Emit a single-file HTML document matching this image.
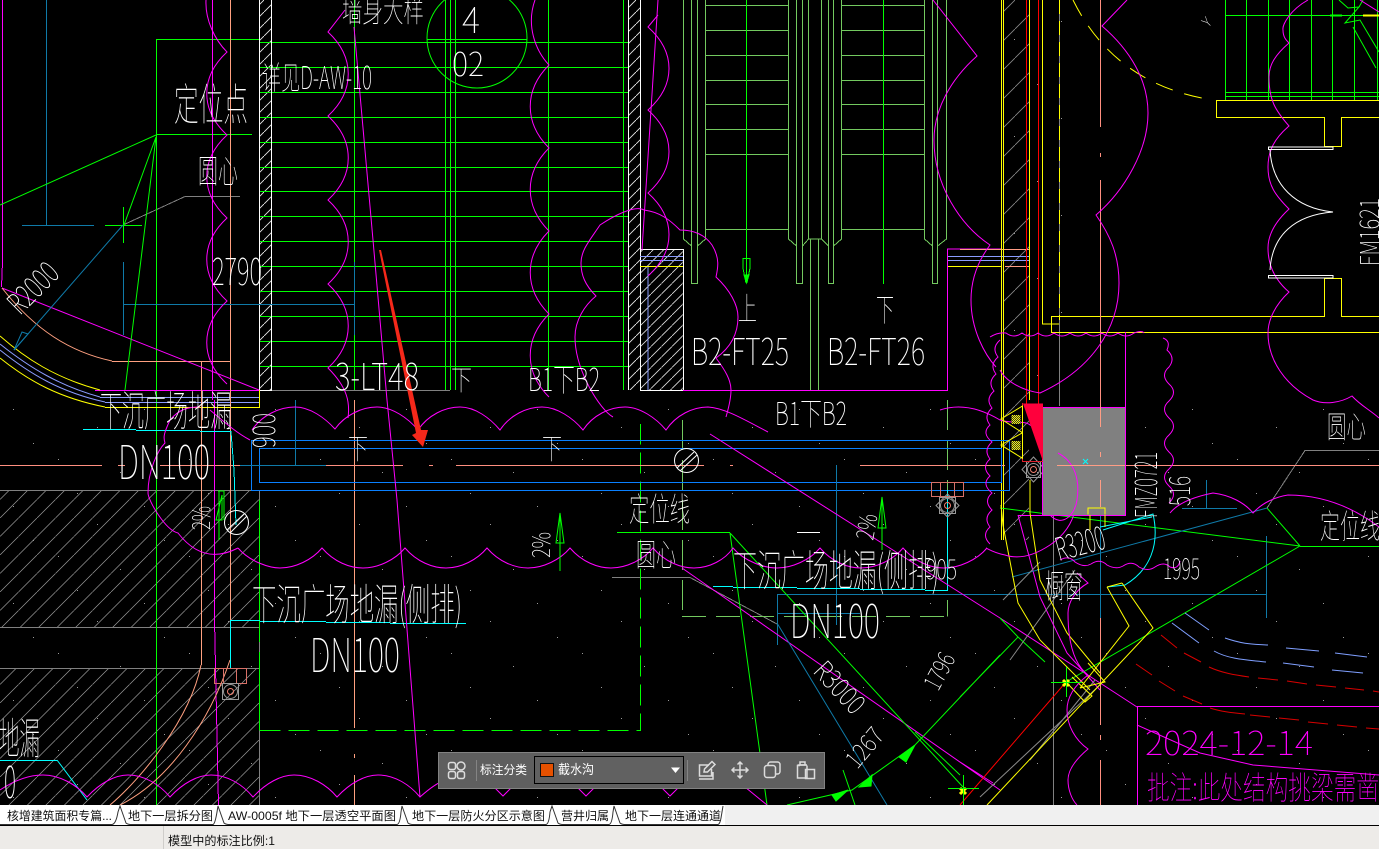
<!DOCTYPE html>
<html lang="zh"><head><meta charset="utf-8"><title>CAD</title>
<style>
html,body{margin:0;padding:0;background:#000;width:1379px;height:849px;overflow:hidden}
svg{display:block;position:absolute;left:0;top:0}
.c text{font-family:"Noto Sans CJK SC","Liberation Sans",sans-serif;font-weight:100;fill:#fff}
.ui text{font-family:"Liberation Sans","Noto Sans CJK SC",sans-serif;font-size:12px;fill:#111}
</style></head><body>
<svg width="1379" height="849" viewBox="0 0 1379 849" xmlns="http://www.w3.org/2000/svg">
<defs>
<pattern id="h18" width="18.5" height="18.5" patternUnits="userSpaceOnUse"><path d="M-1,19.5 L19.5,-1" stroke="#9a9a9a" stroke-width=".7"/></pattern>
<pattern id="hw" width="12" height="12" patternUnits="userSpaceOnUse"><path d="M-1,13 L13,-1" stroke="#e8e8e8" stroke-width=".9"/></pattern>
<pattern id="hb" width="10.5" height="10.5" patternUnits="userSpaceOnUse"><path d="M-1,11.5 L11.5,-1" stroke="#e0e0e0" stroke-width=".8"/></pattern>
<pattern id="hg" width="29" height="29" patternUnits="userSpaceOnUse"><path d="M-1,30 L30,-1" stroke="#8a8a8a" stroke-width=".8"/></pattern>
<pattern id="dots" width="131" height="97" patternUnits="userSpaceOnUse"><g fill="#9a9a9a"><rect x="13" y="21" width="1" height="1"/><rect x="58" y="71" width="1" height="1"/><rect x="97" y="39" width="1" height="1"/><rect x="120" y="84" width="1" height="1"/><rect x="33" y="55" width="1" height="1"/><rect x="77" y="8" width="1" height="1"/></g></pattern>
<pattern id="chk" width="2" height="2" patternUnits="userSpaceOnUse"><rect width="2" height="2" fill="#ffff00"/><rect width="1" height="1" fill="#333"/><rect x="1" y="1" width="1" height="1" fill="#333"/></pattern>
</defs>
<rect width="1379" height="849" fill="#000"/>
<rect y="400" width="1379" height="405" fill="url(#dots)"/>
<rect x="1002" y="0" width="60" height="400" fill="url(#dots)"/>

<!-- hatches -->
<rect x="0" y="491" width="259" height="136" fill="url(#h18)"/>
<rect x="0" y="668" width="259" height="137" fill="url(#h18)"/>
<rect x="260" y="0" width="12" height="390" fill="url(#hw)"/>
<rect x="628" y="0" width="12" height="390" fill="url(#hw)"/>
<rect x="640" y="249" width="43" height="141" fill="url(#hb)"/>
<rect x="1003" y="0" width="26" height="540" fill="url(#hg)"/>

<g fill="none" stroke-width="1" shape-rendering="crispEdges">
<!-- gray -->
<path stroke="#808080" d="M0,490.5H259M0,627.5H259M0,668.5H259M259.5,490V805M1053.5,515V805M1059.5,0V406M123,225L185,196.5H240"/>
<path stroke="#808080" d="M272,390.5H450M612,577.5H690L777,624M1267,508L1305,450.5H1379"/>
<!-- green horizontals -->
<path stroke="#00ff00" d="M260,42.5H628M260,67.5H628M260,92.5H628M260,117.5H628M260,142.5H628M260,167.5H628M260,191.5H628M260,216.5H628M260,241.5H628M260,266.5H628M260,291.5H628M260,316.5H628M260,341.5H628M260,366.5H628"/>
<path stroke="#00ff00" d="M354.5,0V390M445.5,0V390M450.5,0V390M455.5,0V390M548.5,0V390M623.5,0V390M156.5,39V805M156,39.5H260M156,134.5H252M427,39.5H527"/>
<path stroke="#00ff00" d="M105,225.5H142M123.5,207V243"/>
<path stroke="#00ff00" stroke-dasharray="21 8" d="M259.5,730.5H640.5V424"/>
<path stroke="#00ff00" d="M259.5,500V642M259.5,652V730M617,532.5H730"/>
<path stroke="#00ff00" d="M1300,546.5H1379M1225.5,15.5H1379M1225.5,0V100M1246.5,0V100M1268.5,0V100M1289.5,0V100M1311.5,0V100M1332.5,0V100M1354.5,0V100M1377.5,0V100M1225,92.5H1379M1225,96.5H1379"/>
<!-- olive stair -->
<path stroke="#73c95f" d="M683.5,0V239L691.5,246M705.5,0V239L697.5,246M691.5,0V283.5H697.5V0M705,5.5H788M705,30.5H788M705,55.5H788M705,80.5H788M705,104.5H788M705,129.5H788M705,154.5H788M705,229.5H788M841,5.5H924M841,30.5H924M841,55.5H924M841,80.5H924M841,104.5H924M841,129.5H924M841,154.5H924M841,229.5H924"/>
<path stroke="#73c95f" d="M788.5,0V239L796.5,246M802.5,0V246L808.5,239H821.5V0M808.5,0V239M821.5,239L828.5,246M828.5,0V283.5H833.5V0M841.5,0V239L833.5,246M796.5,0V283.5H802.5V0M924.5,0V239L932.5,246M946.5,0V239L937.5,246M932.5,0V283.5H937.5V0M810.5,239V390M818.5,239V390"/>
<path stroke="#73c95f" d="M682.5,420V616.5M947.5,400V616.5" stroke-dasharray="30 10"/>
<path stroke="#73c95f" d="M682,616.5H948" stroke-dasharray="24 10"/>
<path stroke="#00ff00" d="M746.5,0V283M883.5,0V284M743,258.5H750V268L747,283M743,258V268L746,283"/>
<!-- wall outlines -->
<path stroke="#fff" d="M259.5,0V390M271.5,0V390M628.5,0V390M640.5,0V390M640,249.5H683M683.5,249V390M640,390.5H683M259,390.5H272"/>
<path stroke="#8a9cff" d="M640,256.5H683M640,260.5H683M947,256.5H1029M947,260.5H1029M648,266V390M100,397.5H259M105,402.5H259"/>
<path stroke="#ffff00" d="M640,266.5H683M947,266.5H1001M105,407.5H259M259.5,390V408"/>
<path stroke="#ff00ff" d="M683,390.5H947.5V249H1002M95,390.5H259"/>
<path stroke="#ff9d85" d="M960,249.5H1029M1005,266.5H1029"/>
<!-- yellow frame -->
<path stroke="#ffff00" d="M1001.5,0V540M1003.5,0V540M1029.5,0V400M1042.5,0V324H1059" />
<path stroke="#ffff00" d="M1051.5,316.5H1324.5V278.5H1341.5V316.5H1379M1051.5,316V332.5H1379M1216.5,100.5H1379M1216.5,100V117.5H1324.5V146.5H1341.5V117.5H1379"/>
<!-- red, salmon -->
<path stroke="#ff0000" d="M1026.5,0V404M1038.5,0V404"/>
<path stroke="#ff8f80" d="M1100.5,0V127M1100.5,153V157M1100.5,180V407M1100.5,407V455M1100.5,457V460M1100.5,480V507M1100.5,618V725M1100.5,735V740M1100.5,760V805"/>
<path stroke="#ff8f80" d="M0,465.5H102M118,465.5H125M160,465.5H325M326,465.5H403M429,465.5H433M456,465.5H704M730,465.5H733M860,465.5H1005M1057,465.5H1379"/>
<path stroke="#ffa080" d="M230.5,0V361.5H112M201.5,361V665M230.5,361V660M354.5,400V728M354.5,754V758M354.5,775V805"/>
<!-- blue -->
<path stroke="#0a80ff" d="M251,440.5H1010M259,448.5H1001M259,482.5H1001M251,490.5H1010M251.5,440V491M259.5,448V483M1009.5,440V491M1001.5,448V483"/>
<!-- teal -->
<path stroke="#0f7aa8" d="M46.5,0V225.5M22,225.5H94M123,304.5H355M123.5,262V335M354.5,262V335M295.5,400V465.5M240,465.5H326M836.5,465V625M777.5,595V645M777,594.5H1267M777,613.5H860M1100.5,507V618M1266.5,536V618M1182,508.5H1237M1206.5,480V508"/>
<!-- magenta straight -->
<path stroke="#ff00ff" d="M2.5,0V262L1.5,287M212.5,0V400M214.5,400V620L218.5,805M1137.5,706.5H1379M1137.5,706V805M1042.5,407.5H1125.5V515.5H1042.5V407.5M1125.5,332V515M1018,515.5H1070"/>
<!-- cyan -->
<path stroke="#00ffff" d="M83,429.5H136M136,430.5H200M200,431.5H231V432L234,470L236,525M230.5,620.5V668M230,620.5H260M260,621.5H326M326,622.5H390M390,623.5H466M713,586.5H733M733,587.5H797M797,588.5H860M860,589.5H925M925,590.5H947.5V490M0,760.5H57"/>
</g>

<g fill="none" stroke-width="1">
<!-- curved road bottom-left -->
<path stroke="#ffff00" d="M0,336C25,358 55,378 100,390M0,358C30,382 60,398 105,407"/>
<path stroke="#8a9cff" d="M0,344C30,368 60,386 100,397M0,350C30,374 60,392 105,402"/>
<!-- diagonals -->
<path stroke="#ff00ff" d="M2,288L259,390M354,27L373,240L387,400L397,500L420,797M658,0L651,110L642,250M710,434L1000,618L1137,707M682,568L1000,790M1137,725L1200,753L1253,765L1379,775M1018,515L1040,597L1067,653L1100,690M960,762L993,783"/>
<path stroke="#ffa080" d="M2,288C35,330 70,352 112,361"/>
<path stroke="#00ff00" d="M0,205L156,135M156,137L124,225M156,137L125,390M730,533L767,805M730,533L963,787M1300,546L1267,508M1300,546L1000,508M1300,546L1066,682M960,697L1018,637L1000,618M1018,637L1045,662M1000,655L915,745L852,790L787,805M843,770L855,805M915,732L960,775"/>
<path stroke="#0f7aa8" d="M14,350L123,225M777,623L887,805M1012,577L1267,508"/>
<path stroke="#ffa080" d="M201,665C190,720 140,780 110,805M230,660C210,720 170,780 120,805"/>
<path stroke="#00ffff" d="M57,760L87,800M1103,530L1153,514C1160,545 1150,570 1125,585L1107,587M1100,527L1152,517"/>
<path stroke="#8a8a8a" d="M980,797L1102,683M1003,600L1040,562M1010,660L1075,570M1030,760L1095,680"/>
<path stroke="#ffff00" d="M1001,505L1003,525L1018,603L1040,640L1090,690M1030,480L1030,513L1040,580L1067,633L1100,673M1107,587L1129,626L1080,688M1122,583L1153,628L987,805M1107,587L1122,583M1080,688L1105,682L1088,663M1067,683L1085,702L1092,696L1072,677"/>
<path stroke="#ff0000" d="M1066,682L990,770L960,805"/>
<path stroke="#ffff00" stroke-width="1" stroke-dasharray="18 12" d="M1073,0Q1115,85 1213,100"/>
<path stroke="#ffff00" stroke-dasharray="14 7" d="M1059.5,0V320"/>
<path stroke="#00ff00" d="M1339,0L1348,8L1359,7L1345,23L1360,20L1379,52M1353,27L1376,68M1363,0L1359,7"/>
<path stroke="#00ff00" stroke-width="2" d="M1330,15.5H1342"/>
<path stroke="#ffff00" stroke-width="2" d="M1363,15.5H1379"/>
<circle cx="477" cy="38" r="50" stroke="#00ff00"/>
<!-- scallops -->
<g stroke="#ff00ff">
<path d="M206,0C205,20 215,40 227,52c-27,25 -27,58 0,83c-27,25 -27,58 0,83c-27,25 -27,58 0,83c-27,25 -27,58 0,83"/>
<path d="M345,10L328,32c27,25 27,59 0,84c27,25 27,59 0,84c27,25 27,59 0,84c27,25 27,59 0,84c20,20 22,35 20,50"/>
<path d="M535,0C526,25 535,50 549,65c-25,25 -25,58 0,83c-25,25 -25,58 0,83c-25,25 -25,58 0,83c-25,25 -25,58 0,83"/>
<path d="M658,15L648,27c28,25 28,58 0,83c28,25 28,58 0,83c28,25 28,58 0,83"/>
<path d="M613,417C600,410 575,370 575,337C575,320 585,305 596,296C585,285 581,275 581,263C581,250 590,240 600,225C615,215 635,205 644,210C660,212 670,220 680,230C695,230 705,235 712,245C720,258 718,268 716,277C730,290 738,305 738,317C738,335 730,348 716,358C725,370 731,380 731,390C731,400 728,410 726,417"/>
<path d="M933,0L977,56C950,80 934,110 934,140C934,185 960,225 990,245C975,265 971,285 971,300C971,330 985,355 996,367"/>
<path d="M1127,0L1102,26C1130,50 1148,80 1148,113C1148,150 1125,190 1096,215C1110,235 1119,255 1119,283C1119,330 1090,370 1040,393C1020,390 1005,380 1000,370"/>
<path d="M1289,43C1275,55 1269,65 1269,77C1269,100 1275,110 1289,126C1275,138 1268,150 1268,167C1268,185 1275,195 1289,209C1275,222 1268,235 1268,248C1268,265 1275,280 1289,292C1275,305 1268,320 1268,333C1268,360 1285,385 1313,400C1325,405 1340,403 1352,396C1360,405 1370,410 1379,418"/>
<path d="M1308,0C1290,10 1282,25 1283,30C1283,37 1286,40 1289,43M1360,0L1379,12"/>
<!-- horizontal rows -->
<path d="M252,430C262,415 280,407 295,407C310,407 325,418 335,429C345,415 362,407 377,407C392,407 408,418 418,430C428,415 445,407 460,407C475,407 490,418 500,430C510,415 527,407 542,407C557,407 573,418 583,430C593,415 610,407 625,407C640,407 656,418 666,430C676,415 693,407 708,407C725,408 745,420 768,432"/>
<path d="M238,548C250,562 270,568 280,568C295,568 312,560 322,548C334,562 350,568 363,568C378,568 395,560 405,548C417,562 433,568 446,568C461,568 477,560 487,548C499,562 515,568 528,568C543,568 560,560 570,548C582,562 598,568 611,568C626,568 643,560 653,548C665,562 681,568 694,568C709,568 725,560 733,548C745,562 765,568 777,568C792,568 810,560 820,548C832,562 848,568 861,568C876,568 893,560 903,548C915,562 931,568 944,568C959,568 977,560 987,548"/>
<path d="M0,790C15,780 30,775 43,775C60,775 77,785 87,797C100,783 115,775 128,775C145,775 160,785 170,797C183,783 198,775 211,775C228,775 243,785 253,797C266,783 281,775 294,775C311,775 327,785 337,797C350,783 365,775 378,775C395,775 410,785 420,797C430,788 437,783 445,780"/>
<path d="M495,788L503,796L511,788M578,788L586,796L594,788M662,788L670,796L678,788M745,787L767,805"/>
<path d="M238,548C215,560 195,555 178,533C165,530 148,500 148,493C148,470 158,450 165,443C163,437 164,433 170,420C180,408 190,407 200,407"/>
<path d="M210,410C222,420 235,432 250,440"/>
<path d="M1000,340q-9,8 -2,17q-9,8 -2,17q-9,8 -2,17q-9,8 -2,17q-9,8 -2,17q-9,8 2,17q-9,8 -2,17q-9,8 0,17q-9,8 2,17q-9,8 0,17q-9,8 -2,17q-9,8 0,17"/>
<path d="M1163,338q8,3 4,12q9,8 2,17q-9,8 0,17q9,8 0,17q-9,8 0,17q9,8 0,17q-9,8 0,17q9,8 0,17q-9,8 0,17q9,8 0,17"/>
<path d="M990,337q8,-5 16,-4q8,6 16,0q8,6 16,0q8,6 16,0q8,6 16,0q8,6 16,0q8,6 16,0q8,6 16,0q8,6 16,0q8,-3 10,0"/>
<path d="M940,410C955,405 975,405 1000,420C1010,424 1025,420 1030,425C1045,430 1053,445 1058,453C1075,462 1080,480 1077,500C1075,520 1065,535 1050,545C1035,555 1020,560 1005,555C995,553 990,550 986,548"/>
<path d="M1060,560q9,-5 15,2q9,6 16,2q9,-6 16,1q9,5 16,1q9,-6 16,1q9,5 16,0q9,-6 15,0q8,3 10,-6"/>
<path d="M1077,573L1088,583C1075,590 1068,603 1068,613C1068,645 1075,665 1088,675M1088,675C1075,685 1067,697 1067,710C1067,725 1075,740 1088,749C1075,760 1068,770 1068,780C1068,790 1072,800 1077,805"/>
<path d="M1170,513C1178,503 1193,497 1213,493C1230,495 1245,503 1253,513C1262,503 1275,497 1288,495C1320,495 1350,505 1379,527"/>
</g>
<!-- circles -->
<g stroke="#fff"><circle cx="236.500" cy="522.500" r="12"/><circle cx="686.500" cy="460.500" r="12"/>
<path d="M227,530L244,514M230,533L247,516M677,468L694,452M680,471L697,455"/>
<path d="M1268.500,147H1333V149.500H1268.500ZM1268.500,275.500H1333V278H1268.500ZM1270,150C1272,185 1295,208 1333,212C1295,215 1272,235 1270,270"/>
</g>
<!-- salmon manhole boxes -->
<g stroke="#d87067"><rect x="214.500" y="668.500" width="32" height="15"/><path d="M223.500,668V683M236.500,668V683"/><rect x="931.500" y="482.500" width="32" height="14"/><path d="M940.500,482V496M954.500,482V496"/></g>
<g stroke="#999"><rect x="222.500" y="683.500" width="16" height="16"/><rect x="939.500" y="497.500" width="16" height="16"/><circle cx="947.500" cy="505.500" r="7"/><circle cx="230.500" cy="691.500" r="7"/><rect x="1026.500" y="461.500" width="14" height="16"/><circle cx="1033.500" cy="469.500" r="6"/>
<path d="M947.500,494L959,505.500L947.500,517L936,505.500ZM1033.500,457L1045,469.500L1033.500,482L1022,469.500Z"/></g>
<circle cx="230.500" cy="691.500" r="3" stroke="#f08070"/><circle cx="947.500" cy="505.500" r="3" stroke="#f08070"/><circle cx="1033.500" cy="469.500" r="3" stroke="#f08070"/>
<!-- R teal arrow -->
<path stroke="#0f7aa8" d="M14,350L28,334L22,332Z"/>
<!-- bottom-right dashes -->
<g stroke="#7f9fff"><path d="M1185,613L1209,630M1172,623L1199,643M1225,638C1245,645 1255,644 1268,645M1286,648L1319,651M1335,653L1367,657M1214,651C1230,660 1250,660 1266,662M1283,663L1314,667M1332,670L1363,673"/></g>
<g stroke="#d80000"><path d="M1161,635L1177,648M1184,653L1201,662M1209,667C1222,673 1235,675 1249,677M1258,678L1278,680M1287,681L1307,684M1316,685L1336,687M1345,688L1364,690M1373,691L1379,692M1136,664L1152,675M1159,681L1175,691M1183,696L1202,704M1210,708C1222,712 1235,713 1245,714M1250,715L1270,717M1279,718L1299,720M1308,722L1328,724M1337,725L1357,727M1366,728L1379,729"/></g>
<path stroke="#fff" d="M797,532.500H820"/>
</g>

<!-- fill shapes -->
<rect x="1043" y="408" width="82" height="107" fill="#808080"/>
<path d="M1042.500,407.500H1125.500V515.500H1042.500Z" fill="none" stroke="#ff00ff" shape-rendering="crispEdges"/>
<path d="M1058,453C1075,462 1080,480 1077,500C1075,515 1062,528 1050,515" fill="none" stroke="#ff00ff"/>
<path d="M1083,459l5,5m0,-5l-5,5" stroke="#00ffff" fill="none"/>
<path d="M1100.500,407V427M1100.500,452V457M1100.500,480V507M1057,465.500H1125" stroke="#ff9d85" fill="none" shape-rendering="crispEdges"/>
<path d="M1023,403.500H1043V461.500Z" fill="#ff003c"/>
<path d="M1022.500,403V461.500H1043" fill="none" stroke="#e0202c" shape-rendering="crispEdges"/>
<path d="M1001,419L1022.500,406V432.700ZM1001,445L1022.500,432.700V458.300Z" fill="none" stroke="#ffff00"/>
<rect x="1011.500" y="415" width="9" height="9" fill="url(#chk)"/><rect x="1011.500" y="441" width="9" height="9" fill="url(#chk)"/>
<path d="M1088,514.500V508H1105V514.500M1090,515V530M1105,515V527" fill="none" stroke="#ffff00"/>
<path d="M379,250L381,250L421,430L428,430L423,447L412,435L416,433Z" fill="#f5281a"/>
<path d="M234,491L240,491V520" fill="none" stroke="#00ff00" transform="translate(-16,0)"/>
<!-- green arrows -->
<g fill="#00ff00" stroke="#00ff00" stroke-width="1">
<path d="M560,513L556,543H564Z" fill="none"/><path d="M560,513V571"/>
<path d="M882,497L878,528H886Z" fill="none"/><path d="M882,497V550"/>
<path d="M219,491V540" /><path d="M216,520H222V495Z" fill="none"/>
<path d="M744,275H749L746.500,283Z"/>
<path d="M899,757L915,745L906,762ZM859,787L872,775L871,786ZM832,795L848,790L836,801Z"/>
</g>
<g stroke="#ffff00" stroke-width="3" fill="none"><path d="M1063,680L1069,686M1069,680L1063,686M960,788L966,794M966,788L960,794"/></g>
<g stroke="#00ff00" fill="none"><path d="M1051,682.500H1082M1066.500,667V697M948,788.500H979M963.500,775V805"/></g>

<!-- CAD text -->
<g class="c">
<text x="342" y="22" font-size="31" textLength="82" lengthAdjust="spacingAndGlyphs">墙身大样</text>
<text x="462" y="33" font-size="36" textLength="18" lengthAdjust="spacingAndGlyphs">4</text>
<text x="452" y="76" font-size="33" textLength="32" lengthAdjust="spacingAndGlyphs">02</text>
<text x="262" y="89" font-size="32" textLength="110" lengthAdjust="spacingAndGlyphs">详见D-AW-10</text>
<text x="174" y="120" font-size="44" textLength="74" lengthAdjust="spacingAndGlyphs">定位点</text>
<text x="198" y="183" font-size="33" textLength="40" lengthAdjust="spacingAndGlyphs">圆心</text>
<text x="212" y="285" font-size="37" textLength="50" lengthAdjust="spacingAndGlyphs">2790</text>
<text transform="translate(20,316) rotate(-45)" font-size="30" textLength="58" lengthAdjust="spacingAndGlyphs">R2000</text>
<text x="335" y="390" font-size="37" textLength="84" lengthAdjust="spacingAndGlyphs">3-LT48</text>
<text x="451" y="390" font-size="28" textLength="21" lengthAdjust="spacingAndGlyphs">下</text>
<text x="528" y="391" font-size="32" textLength="72" lengthAdjust="spacingAndGlyphs">B1下B2</text>
<text x="738" y="320" font-size="32" textLength="19" lengthAdjust="spacingAndGlyphs">上</text>
<text x="876" y="321" font-size="32" textLength="18" lengthAdjust="spacingAndGlyphs">下</text>
<text x="691" y="365" font-size="37" textLength="98" lengthAdjust="spacingAndGlyphs">B2-FT25</text>
<text x="827" y="365" font-size="37" textLength="98" lengthAdjust="spacingAndGlyphs">B2-FT26</text>
<text x="775" y="425" font-size="32" textLength="72" lengthAdjust="spacingAndGlyphs">B1下B2</text>
<text x="100" y="426" font-size="42" textLength="132" lengthAdjust="spacingAndGlyphs">下沉广场地漏</text>
<text x="118" y="479" font-size="47" textLength="92" lengthAdjust="spacingAndGlyphs">DN100</text>
<text transform="translate(275,448) rotate(-90)" font-size="30" textLength="35" lengthAdjust="spacingAndGlyphs">900</text>
<text x="348" y="459" font-size="29" textLength="20" lengthAdjust="spacingAndGlyphs">下</text>
<text x="542" y="459" font-size="29" textLength="20" lengthAdjust="spacingAndGlyphs">下</text>
<text x="252" y="620" font-size="43" textLength="210" lengthAdjust="spacingAndGlyphs">下沉广场地漏(侧排)</text>
<text x="310" y="672" font-size="47" textLength="90" lengthAdjust="spacingAndGlyphs">DN100</text>
<text x="-1" y="754" font-size="43" textLength="41" lengthAdjust="spacingAndGlyphs">地漏</text>
<text x="4" y="798" font-size="44" textLength="12" lengthAdjust="spacingAndGlyphs">0</text>
<text x="629" y="521" font-size="33" textLength="61" lengthAdjust="spacingAndGlyphs">定位线</text>
<text x="636" y="566" font-size="32" textLength="40" lengthAdjust="spacingAndGlyphs">圆心</text>
<text transform="translate(210,530) rotate(-90)" font-size="24" textLength="24" lengthAdjust="spacingAndGlyphs">2%</text>
<text transform="translate(550,558) rotate(-90)" font-size="24" textLength="26" lengthAdjust="spacingAndGlyphs">2%</text>
<text transform="translate(873,541) rotate(-80)" font-size="24" textLength="26" lengthAdjust="spacingAndGlyphs">2%</text>
<text x="733" y="586" font-size="43" textLength="206" lengthAdjust="spacingAndGlyphs">下沉广场地漏(侧排)</text>
<text x="926" y="579" font-size="27" textLength="31" lengthAdjust="spacingAndGlyphs">905</text>
<text x="790" y="638" font-size="47" textLength="90" lengthAdjust="spacingAndGlyphs">DN100</text>
<text transform="translate(812,672) rotate(47)" font-size="27" textLength="60" lengthAdjust="spacingAndGlyphs">R3000</text>
<text transform="translate(938,692) rotate(-62)" font-size="24" textLength="38" lengthAdjust="spacingAndGlyphs">1796</text>
<text transform="translate(857,770) rotate(-50)" font-size="24" textLength="44" lengthAdjust="spacingAndGlyphs">1267</text>
<text x="1327" y="438" font-size="31" textLength="39" lengthAdjust="spacingAndGlyphs">圆心</text>
<text x="1320" y="538" font-size="33" textLength="60" lengthAdjust="spacingAndGlyphs">定位线</text>
<text transform="translate(1157,518) rotate(-90)" font-size="30" textLength="66" lengthAdjust="spacingAndGlyphs">FMZ0721</text>
<text transform="translate(1190,506) rotate(-90)" font-size="28" textLength="30" lengthAdjust="spacingAndGlyphs">516</text>
<text transform="translate(1379,266) rotate(-90)" font-size="26" textLength="68" lengthAdjust="spacingAndGlyphs">FM1621</text>
<text x="1163" y="579" font-size="28" textLength="37" lengthAdjust="spacingAndGlyphs">1995</text>
<text transform="translate(1059,561) rotate(-15)" font-size="32" textLength="50" lengthAdjust="spacingAndGlyphs">R3200</text>
<text x="1045" y="598" font-size="33" textLength="38" lengthAdjust="spacingAndGlyphs">橱窗</text>
<text transform="translate(1208,28) rotate(-45)" font-size="14">Y</text>
<text x="1145" y="755" font-size="33" textLength="168" lengthAdjust="spacingAndGlyphs" style="fill:#ff00ff">2024-12-14</text>
<text x="1147" y="799" font-size="32" textLength="232" lengthAdjust="spacingAndGlyphs" style="fill:#ff00ff">批注:此处结构挑梁需凿</text>
</g>

<!-- toolbar -->
<rect x="438.500" y="752.500" width="386" height="36" fill="#5f5f5f" stroke="#828282" shape-rendering="crispEdges"/>
<path d="M476.500,760V781M687.500,760V781" stroke="#848484" shape-rendering="crispEdges"/>
<rect x="534.500" y="756.500" width="149" height="27" fill="#616161" stroke="#000" shape-rendering="crispEdges"/>
<rect x="540.500" y="763.500" width="13" height="13" fill="#e65100" stroke="#111" shape-rendering="crispEdges"/>
<path d="M671,767.500H680L675.500,773Z" fill="#fff"/>
<g class="ui">
<text x="480" y="774" style="fill:#fff" textLength="47" lengthAdjust="spacingAndGlyphs">标注分类</text>
<text x="558" y="774" style="fill:#fff;font-size:13px" textLength="36" lengthAdjust="spacingAndGlyphs">截水沟</text>
</g>
<g fill="none" stroke="#dcdcdc" stroke-width="1.500">
<rect x="448.500" y="771.500" width="7" height="7" rx="2"/><rect x="448.500" y="762.500" width="7" height="7" rx="2"/><rect x="457.500" y="771.500" width="7" height="7" rx="2"/><circle cx="461" cy="766" r="4"/>
<path d="M709,765H699.500V776H711.500V769M699,779H713V772"/><path d="M704,772L704.500,769L712,761.500L715,764.500L707.500,772Z"/>
<path d="M740,762.500V777.500M732.500,770H747.500M737.500,764.500L740,762L742.500,764.500M737.500,775.500L740,778L742.500,775.500M734.500,767.500L732,770L734.500,772.500M745.500,767.500L748,770L745.500,772.500"/>
<rect x="764.500" y="765.500" width="11" height="12" rx="2.500"/><path d="M768,765V764.500A2.500,2.500 0 0 1 770.500,762H777.500A2.500,2.500 0 0 1 780,764.500V771.500A2.500,2.500 0 0 1 777.500,774H776"/>
<path d="M807,765.500V778H797.500V765.500H800M800,762H805V765H800Z"/><path d="M797.500,765H807"/><rect x="805.500" y="769.500" width="9" height="9"/>
</g>

<!-- tab bar + status -->
<rect x="0" y="805" width="1379" height="20" fill="#f0f0f0"/>
<rect x="0" y="805" width="725" height="20" fill="#fff"/>
<path d="M0,825.500H1379" stroke="#000" shape-rendering="crispEdges"/>
<rect x="0" y="826" width="1379" height="23" fill="#edebe8"/>
<path d="M163.500,826V849" stroke="#cfcdca" shape-rendering="crispEdges"/>
<g fill="none" stroke="#333" stroke-width="1">
<path d="M0,824.500H112Q116,824 118,812L120,806L126,823Q127,824 130,824.500H213Q215,824 217,812L218,806L224,823Q225,824 228,824.500H397Q400,824 401,812L402,806L408,823Q409,824 412,824.500H546Q549,824 550,812L552,806L558,823Q559,824 562,824.500H609Q612,824 613,812L614,806L620,823Q621,824 624,824.500H718Q720,824 721,818L723,806"/>
</g>
<g class="ui">
<text x="7" y="820" textLength="105" lengthAdjust="spacingAndGlyphs">核增建筑面积专篇...</text>
<text x="128" y="820" textLength="85" lengthAdjust="spacingAndGlyphs">地下一层拆分图</text>
<text x="228" y="820" textLength="168" lengthAdjust="spacingAndGlyphs">AW-0005f 地下一层透空平面图</text>
<text x="412" y="820" textLength="133" lengthAdjust="spacingAndGlyphs">地下一层防火分区示意图</text>
<text x="561" y="820" textLength="48" lengthAdjust="spacingAndGlyphs">营井归属</text>
<text x="625" y="820" textLength="96" lengthAdjust="spacingAndGlyphs">地下一层连通通道</text>
<text x="168" y="845" textLength="107" lengthAdjust="spacingAndGlyphs">模型中的标注比例:1</text>
</g>
</svg>
</body></html>
